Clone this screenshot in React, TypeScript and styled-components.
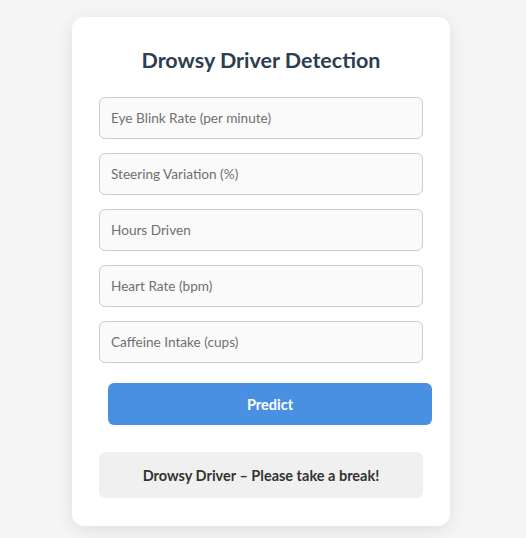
import React from "react";
import styled, { createGlobalStyle } from "styled-components";

const Global = createGlobalStyle`
  html, body { margin: 0; padding: 0; background: #f5f5f5; }
  body { font-family: "Segoe UI", Lato, "Open Sans", sans-serif; }
  * { box-sizing: border-box; }
`;

const Page = styled.div`
  min-height: 538px;
  padding: 17px 0 0 72px;
`;

const Card = styled.div`
  width: 378px;
  background: #ffffff;
  border-radius: 12px;
  box-shadow: 0 4px 18px rgba(0, 0, 0, 0.09);
  padding: 29px 27px 28px;
  display: flex;
  flex-direction: column;
`;

const Title = styled.h2`
  margin: 0 0 23px;
  font-size: 21.5px;
  line-height: 28px;
  font-weight: 700;
  color: #2c3e50;
  text-align: center;
`;

const Input = styled.input`
  width: 324px;
  height: 42px;
  margin: 0 0 14px;
  padding: 0 11px;
  border: 1px solid #cccccc;
  border-radius: 6px;
  background: #fafafa;
  font-family: inherit;
  font-size: 13.6px;
  color: #333;
  outline: none;
  &::placeholder { color: #707070; }
`;

const Button = styled.button`
  width: 324px;
  height: 42px;
  margin: 6px 0 0 9px;
  border: none;
  border-radius: 6px;
  background: #4a90e2;
  color: #ffffff;
  font-family: inherit;
  font-size: 14.5px;
  font-weight: 700;
  cursor: pointer;
`;

const Result = styled.div`
  margin-top: 27px;
  height: 46px;
  border-radius: 6px;
  background: #f0f0f0;
  color: #333333;
  font-size: 14.5px;
  font-weight: 700;
  display: flex;
  align-items: center;
  justify-content: center;
`;

const fields = [
  "Eye Blink Rate (per minute)",
  "Steering Variation (%)",
  "Hours Driven",
  "Heart Rate (bpm)",
  "Caffeine Intake (cups)",
];

export default function App() {
  return (
    <>
      <Global />
      <Page>
        <Card>
          <Title>Drowsy Driver Detection</Title>
          {fields.map((f) => (
            <Input key={f} type="number" placeholder={f} />
          ))}
          <Button>Predict</Button>
          <Result>Drowsy Driver – Please take a break!</Result>
        </Card>
      </Page>
    </>
  );
}
